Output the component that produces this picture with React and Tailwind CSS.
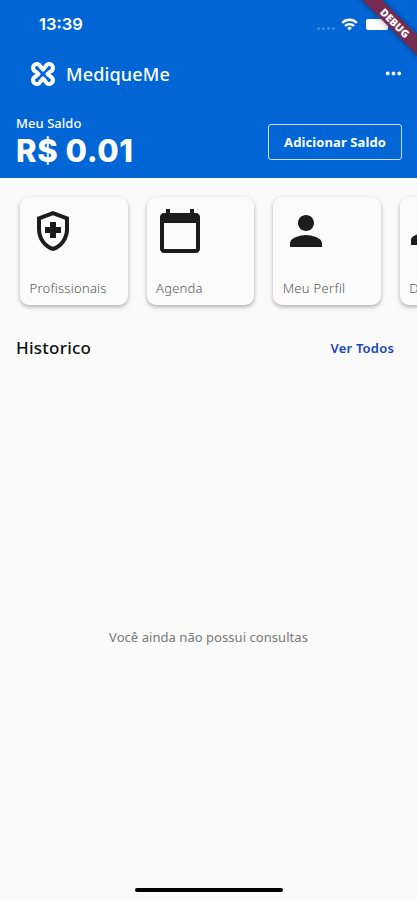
import React from 'react'
import { MdOutlineHealthAndSafety, MdCalendarToday, MdPerson, MdPeople, MdMoreHoriz } from 'react-icons/md'

const menuItems = [
  { label: 'Profissionais', icon: MdOutlineHealthAndSafety, spacing: 'tracking-[0.25px]' },
  { label: 'Agenda', icon: MdCalendarToday, spacing: 'tracking-[0.2px]' },
  { label: 'Meu Perfil', icon: MdPerson, spacing: 'tracking-[0.3px]' },
  { label: 'Dependentes', icon: MdPeople, spacing: 'tracking-[0.1px]' },
]

const Logo = () => (
  <svg className="h-[26px] w-[26px]" viewBox="0 0 26 26" fill="none" stroke="currentColor" strokeWidth="4.1" strokeLinejoin="round">
    <path d="M13 8.5 L10.3 5.3 A3.8 3.8 0 1 0 5.3 10.3 L8.5 13 L5.3 15.7 A3.8 3.8 0 1 0 10.3 20.7 L13 17.5 L15.7 20.7 A3.8 3.8 0 1 0 20.7 15.7 L17.5 13 L20.7 10.3 A3.8 3.8 0 1 0 15.7 5.3 Z" />
  </svg>
)

const StatusBar = () => (
  <div className="flex h-12 items-center justify-between pl-[39px] pr-[29px]">
    <span className="font-['Inter',sans-serif] text-[16.5px] font-semibold leading-none">13:39</span>
    <div className="flex items-center">
      <div className="mr-[6px] mt-[8px] flex gap-[2px]">
        {[0, 1, 2, 3].map((dot) => (
          <span key={dot} className="h-[3px] w-[3px] rounded-full bg-white/25" />
        ))}
      </div>
      <svg className="h-[13px] w-[17px]" viewBox="0 0 17 13" fill="none" stroke="white" strokeWidth="2.4">
        <path d="M1.2 4.8a10.3 10.3 0 0 1 14.6 0" />
        <path d="M4 8a6.4 6.4 0 0 1 9 0" />
        <path d="M8.5 12.6 6.1 10a3.4 3.4 0 0 1 4.8 0z" fill="white" stroke="none" />
      </svg>
      <span className="ml-[8px] h-[11px] w-[22px] rounded-[2px] bg-white" />
    </div>
  </div>
)

const App = () => {
  return (
    <div className="relative flex h-[900px] w-full flex-col overflow-hidden bg-[#fafafa] font-['Noto_Sans',sans-serif]">
      {/* Header */}
      <header className="h-[178px] shrink-0 bg-[#0066d6] text-white">
        <StatusBar />
        <div className="flex h-[52px] items-center justify-between pl-[30px] pr-[12px]">
          <div className="flex items-center gap-[10px]">
            <Logo />
            <h1 className="text-[18px] font-medium leading-none tracking-[0.15px]">MediqueMe</h1>
          </div>
          <MdMoreHoriz className="mb-[1px] h-[23px] w-[23px]" />
        </div>
        <div className="flex items-start justify-between pl-4 pr-[15px] pt-[14px]">
          <div>
            <p className="text-[13px] font-medium leading-[18px] tracking-[0.05px]">Meu Saldo</p>
            <p className="whitespace-nowrap font-['Inter',sans-serif] text-[31px] font-extrabold leading-[38px] tracking-[0.6px]">R$ 0.01</p>
          </div>
          <button className="mt-[10px] h-[36px] w-[134px] whitespace-nowrap rounded-[3px] border border-[#cfdcff] pt-[2px] text-[13px] font-bold tracking-[0.1px]">
            Adicionar Saldo
          </button>
        </div>
      </header>

      {/* Menu cards */}
      <div className="flex shrink-0 gap-[19px] overflow-hidden pb-[10px] pl-5 pt-[19px]">
        {menuItems.map(({ label, icon: Icon, spacing }) => (
          <div key={label} className="flex h-[108px] w-[107.6px] shrink-0 flex-col justify-between rounded-[9px] bg-[#fbfbfb] pb-[7px] pl-[9px] pt-[10px] shadow-[0_2px_4px_rgba(0,0,0,0.3)]">
            <Icon className="h-12 w-12 text-[#1c1c1c]" />
            <span className={`pl-[0.5px] text-[13px] font-light leading-[19px] text-[#555] ${spacing}`}>{label}</span>
          </div>
        ))}
      </div>

      {/* History */}
      <div className="flex items-center justify-between pl-4 pr-[23px] pt-[20px]">
        <h2 className="text-[17px] font-medium leading-[26px] tracking-[0.25px] text-[#111]">Historico</h2>
        <button className="text-[13px] font-semibold leading-[26px] tracking-[0.2px] text-[#1746b3]">Ver Todos</button>
      </div>
      <div className="flex flex-1 items-center justify-center pt-[24px]">
        <p className="text-[13px] leading-5 tracking-[0.05px] text-[#777]">Você ainda não possui consultas</p>
      </div>
      <div className="mx-auto mb-[8px] h-[4px] w-[148px] shrink-0 rounded-full bg-black" />

      {/* Debug ribbon */}
      <div className="absolute left-[344.5px] top-[15.5px] flex h-[14px] w-[100px] rotate-45 items-center justify-center bg-[#762c50] text-[10.5px] font-black leading-none text-white shadow-[0_0_6px_rgba(0,0,0,0.4)]">
        DEBUG
      </div>
    </div>
  )
}

export default App
